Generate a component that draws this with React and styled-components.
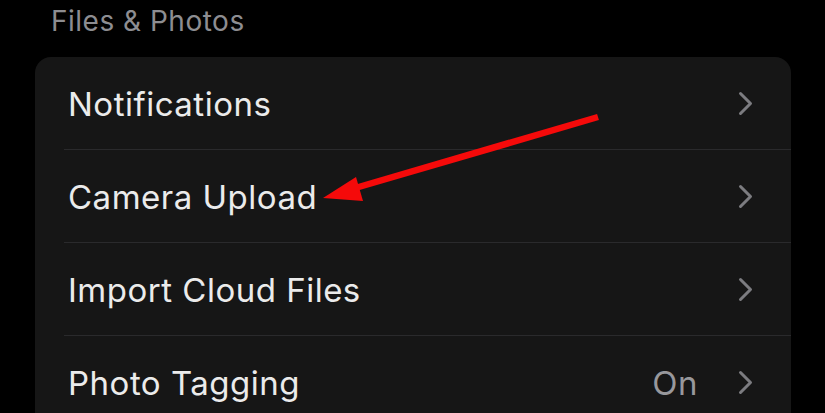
import styled, { createGlobalStyle } from "styled-components";

const GlobalStyle = createGlobalStyle`
	html, body {
		margin: 0;
		padding: 0;
		background: #000;
	}
	body {
		font-family: Inter, "Noto Sans", "Liberation Sans", sans-serif;
		-webkit-font-smoothing: antialiased;
	}
`;

const rows = [
	{ label: "Notifications" },
	{ label: "Camera Upload" },
	{ label: "Import Cloud Files" },
	{ label: "Photo Tagging", value: "On" },
];

const Chevron = () => (
	<svg width="16" height="25" viewBox="0 0 16 25" fill="none">
		<path
			d="M2.5 2.5 L12.5 12.5 L2.5 22.5"
			stroke="#7c7c80"
			strokeWidth="3"
			strokeLinecap="round"
			strokeLinejoin="round"
		/>
	</svg>
);

const Arrow = () => (
	<ArrowSvg width="825" height="413" viewBox="0 0 825 413">
		<line x1="598" y1="117" x2="345" y2="191" stroke="#f50a0a" strokeWidth="6.5" />
		<polygon points="323,198 356,177 363,201" fill="#f50a0a" />
	</ArrowSvg>
);

const App = () => {
	return (
		<Screen>
			<GlobalStyle />
			<Header>Files &amp; Photos</Header>
			<Card>
				{rows.map((row, i) => (
					<Row key={row.label} $last={i === rows.length - 1}>
						<Label>{row.label}</Label>
						<Trailing>
							{row.value ? <Value>{row.value}</Value> : null}
							<Chevron />
						</Trailing>
					</Row>
				))}
			</Card>
			<Arrow />
		</Screen>
	);
};

const Screen = styled.div`
	position: relative;
	width: 825px;
	height: 413px;
	overflow: hidden;
	background: #000;
	padding-left: 35px;
	box-sizing: border-box;
`;

const Header = styled.div`
	height: 57px;
	box-sizing: border-box;
	padding: 2px 0 0 16px;
	color: #8d8d91;
	font-size: 28px;
	line-height: 38px;
	letter-spacing: 0.5px;
`;

const Card = styled.div`
	width: 756px;
	background: #161616;
	border-radius: 16px;
`;

const Row = styled.div`
	position: relative;
	height: 93px;
	display: flex;
	align-items: center;
	justify-content: space-between;
	padding: 0 37px 0 33px;
	box-sizing: border-box;

	&::after {
		content: "";
		display: ${(p) => (p.$last ? "none" : "block")};
		position: absolute;
		left: 29px;
		right: 0;
		bottom: 0;
		height: 1px;
		background: #2a2a2c;
	}
`;

const Label = styled.span`
	color: #ebebeb;
	font-size: 33px;
	letter-spacing: 0.5px;
`;

const Trailing = styled.div`
	display: flex;
	align-items: center;
	gap: 40px;
`;

const Value = styled.span`
	color: #98989c;
	font-size: 33px;
	letter-spacing: 0.5px;
`;

const ArrowSvg = styled.svg`
	position: absolute;
	left: 0;
	top: 0;
	pointer-events: none;
`;

export default App;
